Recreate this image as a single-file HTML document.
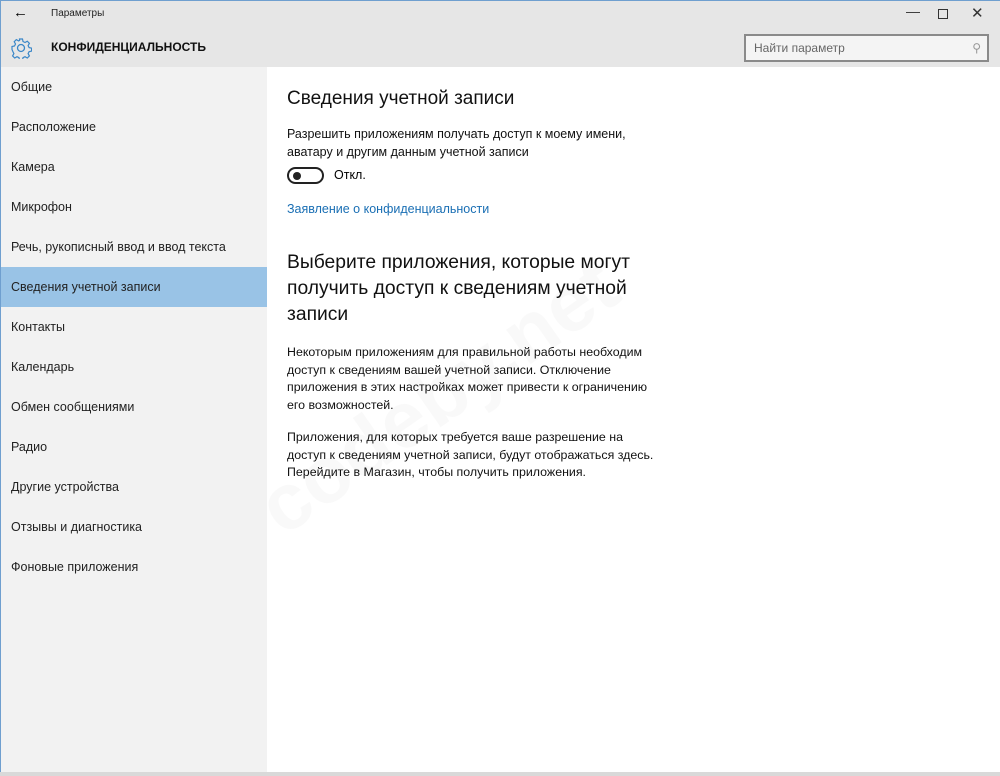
<!DOCTYPE html><html><head><meta charset="utf-8"><style>
*{margin:0;padding:0;box-sizing:border-box}
body{width:1000px;height:776px;overflow:hidden;font-family:"Liberation Sans","DejaVu Sans",sans-serif;background:#fff;position:relative;color:#000}
.top{position:absolute;left:0;top:0;width:1000px;height:67px;background:#e6e6e6;border-top:1px solid #6f9fcf;border-left:1px solid #6f9fcf}
.side{position:absolute;left:0;top:67px;width:267px;height:709px;background:#f2f2f2;border-left:1px solid #6f9fcf}
.side div{height:40px;line-height:40px;padding-left:10px;font-size:12.5px;color:#222}
.side .sel{background:#99c3e6}
.main{position:absolute;left:287px;top:0}
.t{position:absolute;white-space:nowrap}
</style></head><body>
<div class="top">
<div class="t" style="left:12px;top:3px;font-size:15px">&#8592;</div>
<div class="t" style="left:50px;top:7px;font-size:10px;color:#222">Параметры</div>
<div class="t" style="left:905px;top:2px;font-size:14px;color:#333">&#8212;</div>
<div class="t" style="left:937px;top:8px;width:10px;height:10px;border:1px solid #333"></div>
<div class="t" style="left:970px;top:3px;font-size:15px;color:#333">&#10005;</div>
<svg class="t" style="left:9px;top:36px" width="22" height="22" viewBox="0 0 22 22"><circle cx="11" cy="11" r="3.5" fill="none" stroke="#3b87c8" stroke-width="1.3"/><path d="M9.5 2h3l.5 2.5 2 1 2.3-1.3 2.1 2.1-1.3 2.3 1 2 2.5.5v3l-2.5.5-1 2 1.3 2.3-2.1 2.1-2.3-1.3-2 1-.5 2.5h-3l-.5-2.5-2-1-2.3 1.3-2.1-2.1 1.3-2.3-1-2L2 12.5v-3l2.5-.5 1-2L4.2 4.7l2.1-2.1L8.6 3.9l1-.5z" fill="none" stroke="#3b87c8" stroke-width="1.2"/></svg>
<div class="t" style="left:50px;top:39px;font-size:12px;font-weight:bold;color:#111">КОНФИДЕНЦИАЛЬНОСТЬ</div>
<div class="t" style="left:743px;top:33px;width:245px;height:28px;border:2px solid #8a8a8a;background:#f4f4f4;font-size:12px;color:#666;line-height:24px;padding-left:8px">Найти параметр<span style="position:absolute;right:6px;top:0;color:#999">&#9906;</span></div>
</div>
<div class="side">
<div>Общие</div><div>Расположение</div><div>Камера</div><div>Микрофон</div><div>Речь, рукописный ввод и ввод текста</div><div class="sel">Сведения учетной записи</div><div>Контакты</div><div>Календарь</div><div>Обмен сообщениями</div><div>Радио</div><div>Другие устройства</div><div>Отзывы и диагностика</div><div>Фоновые приложения</div>
</div>
<div class="main">
<div class="t" style="left:0;top:88px;font-size:19px;color:#111">Сведения учетной записи</div>
<div class="t" style="left:0;top:125px;font-size:12.5px;line-height:18px;color:#111">Разрешить приложениям получать доступ к моему имени,<br>аватару и другим данным учетной записи</div>
<div class="t" style="left:0;top:167px;width:37px;height:17px;border:2px solid #222;border-radius:9px"><div style="position:absolute;left:4px;top:3px;width:8px;height:8px;border-radius:50%;background:#222"></div></div>
<div class="t" style="left:47px;top:168px;font-size:12.5px">Откл.</div>
<div class="t" style="left:0;top:202px;font-size:12.5px;color:#1a6fb4">Заявление о конфиденциальности</div>
<div class="t" style="left:0;top:250px;font-size:19.3px;line-height:26px;color:#111">Выберите приложения, которые могут<br>получить доступ к сведениям учетной<br>записи</div>
<div class="t" style="left:0;top:344px;font-size:12.4px;line-height:17.5px;color:#111">Некоторым приложениям для правильной работы необходим<br>доступ к сведениям вашей учетной записи. Отключение<br>приложения в этих настройках может привести к ограничению<br>его возможностей.</div>
<div class="t" style="left:0;top:429px;font-size:12.4px;line-height:17.5px;color:#111">Приложения, для которых требуется ваше разрешение на<br>доступ к сведениям учетной записи, будут отображаться здесь.<br>Перейдите в Магазин, чтобы получить приложения.</div>
</div>
<div class="t" style="left:230px;top:350px;font-size:80px;font-weight:bold;color:rgba(0,0,0,0.025);transform:rotate(-35deg)">codeby.net</div>
<div class="t" style="left:0;top:772px;width:1000px;height:4px;background:#d9d9d9"></div>
</body></html>
